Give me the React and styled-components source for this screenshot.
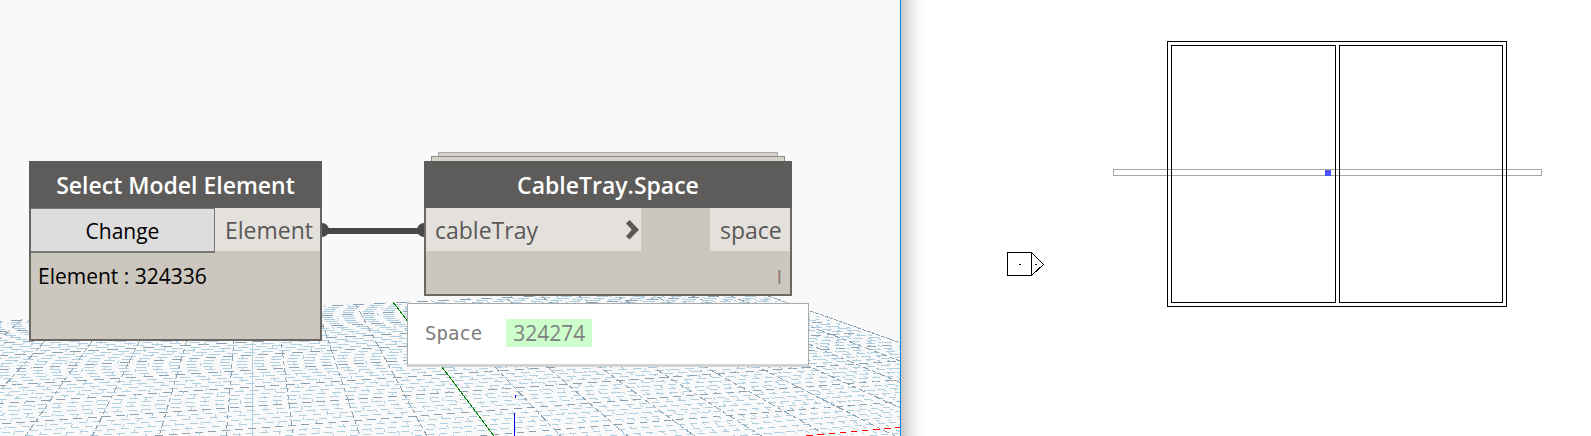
import React from "react";
import styled, { createGlobalStyle } from "styled-components";

const GlobalStyle = createGlobalStyle`
  * { box-sizing: border-box; }
  body { margin: 0; background: #fff; font-family: "Open Sans", sans-serif; }
`;

const Screen = styled.main`
  display: grid;
  grid-template-columns: 901fr 690fr;
  min-height: 100vh;
`;

const Workspace = styled.section`
  position: relative;
  overflow: hidden;
  background: #f9f9f9;
  border-right: 1px solid #1a86dc;
`;

const Scene = styled.svg`
  position: absolute;
  inset: 0;
  width: 100%;
  height: 100%;
`;

const PlanView = styled.section`
  display: flex;
  background: linear-gradient(to right, #c6c6c6 0, #dedede 6px, #eeeeee 13px, #fdfdfd 20px, #fff 24px);
`;

const Plan = styled.svg`
  width: 100%;
`;

const Node = styled.article`
  position: absolute;
  left: ${(p) => p.$x}px;
  top: 161px;
  width: ${(p) => p.$width}px;
  min-height: ${(p) => p.$height}px;
  background: #cbc6be;
  border: 2px solid #6a6763;
  border-top: 0;
`;

const Header = styled.h2`
  display: flex;
  align-items: center;
  justify-content: center;
  height: 47px;
  margin: 0 -2px;
  background: #5e5c5a;
  color: #fff;
  font-size: 23px;
  font-weight: 600;
`;

const PortRow = styled.div`
  display: flex;
  justify-content: space-between;
  height: 43px;
`;

const Port = styled.div`
  display: flex;
  align-items: center;
  justify-content: space-between;
  width: ${(p) => p.$width}px;
  padding: 0 ${(p) => (p.$input ? "2px" : "8px")} 0 ${(p) => (p.$input ? "9px" : "10px")};
  background: #e4e1dc;
  color: #5a5856;
  font-size: 23px;
`;

const ChangeButton = styled.button`
  flex: 1;
  height: 45px;
  padding: 2px 4px 0;
  border: 1px solid #777;
  border-width: 1px 1px 2px 0;
  background: #ddd;
  color: #000;
  font: 21px "Open Sans", sans-serif;
`;

const Selection = styled.p`
  margin: 0;
  padding: 11px 7px;
  color: #000;
  font-size: 21px;
  line-height: 28px;
`;

const Lacing = styled.p`
  margin: 0;
  padding: 12px 8px 0;
  color: #85796f;
  font-size: 20px;
  line-height: 28px;
  text-align: right;
`;

const StackCard = styled.div`
  position: absolute;
  left: ${(p) => p.$x}px;
  top: ${(p) => p.$y}px;
  width: ${(p) => p.$width}px;
  height: 12px;
  background: #d5d2cc;
  border: 1px solid ${(p) => p.$edge};
`;

const Preview = styled.dl`
  position: absolute;
  left: 407px;
  top: 303px;
  width: 402px;
  display: flex;
  align-items: center;
  gap: 24px;
  margin: 0;
  padding: 15px 17px 17px;
  background: #fff;
  border: 1px solid #aaa;
  border-bottom: 3px solid #d3d3d3;
`;

const PreviewKey = styled.dt`
  color: #7d7d7d;
  font: 19px "DejaVu Sans Mono", monospace;
`;

const PreviewValue = styled.dd`
  margin: 0;
  padding: 0 7px;
  background: #ccffcc;
  color: #808080;
  font-size: 21px;
  line-height: 28px;
`;

// Ground plane in perspective: depth lines meet at `vp`, cross lines far to the right.
const vp = { x: 252.5, y: 113 };
const farX = 4430;
const light = "#b0cfe1";
const dark = "#8ba1b2";

const crossPoint = (j) => {
  const dy = 1 / (0.002874 + j * 0.0000483);
  return { x: vp.x + (dy * 241) / 322, y: vp.y + dy };
};

// Where the depth line with index k meets the cross line with index j.
const meet = (k, j) => {
  const t = (240.5 + k * 13.34) / 322;
  const p = crossPoint(j);
  const m = (p.y - vp.y) / (farX - p.x);
  const dy = (p.y - vp.y + m * (p.x - vp.x)) / (1 + m * t);
  return { x: vp.x + t * dy, y: vp.y + dy };
};

// A nearly level line is drawn as one flat dash for each pixel row that it crosses.
const crossPath = (j) => {
  const p = crossPoint(j);
  const m = (p.y - vp.y) / (farX - p.x);
  const end = meet(50, j).x;
  const step = 1 / m;
  const length = Math.min(11, step * 0.6);
  let d = "";
  const first = Math.ceil(p.y + m * p.x) + 1;
  for (let row = first; row > 0; row--) {
    const x = Math.round(p.x + (p.y - row) / m);
    if (x > Math.min(end - length, 901)) break;
    if (row < 440) d += `M${x} ${row + 0.5}h${Math.round(length)}`;
  }
  return d;
};

function Ground() {
  const cross = [];
  for (let j = -24; j <= 50; j++) {
    if (j === 0) continue;
    cross.push(<path key={j} d={crossPath(j)} stroke={j % 5 === 0 ? dark : light} />);
  }
  const depth = [];
  for (let k = -50; k <= 50; k++) {
    if (k === 0) continue;
    const a = meet(k, 50);
    const b = meet(k, -40);
    const major = k % 5 === 0;
    let dash = major ? "7 3 4 3" : "4 7 3 8";
    if (k === -18) dash = undefined;
    if (k === 50) dash = "4 1";
    depth.push(
      <line
        key={k}
        x1={a.x}
        y1={a.y}
        x2={b.x}
        y2={b.y}
        stroke={major ? dark : light}
        strokeDasharray={dash}
        strokeDashoffset={(k + 50) * 7}
      />
    );
  }
  return (
    <g shapeRendering="crispEdges" fill="none">
      {cross}
      {depth}
      <line x1="393" y1="302" x2="494" y2="436" stroke="#008000" />
      <path d="M806 435.5h7M817 434.5h7M829 433.5h6M840 432.5h6M851 431.5h6M862 430.5h6M873 429.5h7M884 428.5h7M895 427.5h6" stroke="#ff0000" />
      <path d="M515.5 395v3M514.5 413v40" stroke="#0000e6" />
    </g>
  );
}

export default function App() {
  return (
    <>
      <GlobalStyle />
      <Screen>
        <Workspace>
          <Scene aria-hidden="true">
            <Ground />
            <rect x="322" y="228" width="102" height="6" fill="#484848" />
            <circle cx="322" cy="230" r="7" fill="#484848" />
            <circle cx="424" cy="230" r="7" fill="#484848" />
          </Scene>

          <Node $x={29} $width={293} $height={180}>
            <Header>Select Model Element</Header>
            <PortRow>
              <ChangeButton type="button">Change</ChangeButton>
              <Port $width={105}>Element</Port>
            </PortRow>
            <Selection>Element : 324336</Selection>
          </Node>

          <StackCard $x={438} $y={152} $width={340} $edge="#aaa9a7" />
          <StackCard $x={431} $y={156} $width={354} $edge="#8d8b89" />
          <Node $x={424} $width={368} $height={135}>
            <Header>CableTray.Space</Header>
            <PortRow>
              <Port $width={215} $input>
                cableTray
                <svg width="13" height="20" viewBox="0 0 13 20" aria-hidden="true">
                  <path d="M3.6 0 13 9.8 3.6 19.6 0 16.2 5.8 9.8 0 3.4Z" fill="#5a5856" />
                </svg>
              </Port>
              <Port $width={80}>space</Port>
            </PortRow>
            <Lacing>I</Lacing>
          </Node>

          <Preview>
            <PreviewKey>Space</PreviewKey>
            <PreviewValue>324274</PreviewValue>
          </Preview>
        </Workspace>

        <PlanView>
          <Plan viewBox="901 0 690 436" role="img" aria-label="Floor plan">
            <g fill="none" stroke="#000" shapeRendering="crispEdges">
              <rect x="1113.5" y="169.5" width="428" height="6" stroke="#a6a6a6" />
              <rect x="1167.5" y="41.5" width="339" height="265" />
              <rect x="1171.5" y="45.5" width="164" height="257" />
              <rect x="1339.5" y="45.5" width="163" height="257" />
              <rect x="1007.5" y="252.5" width="24" height="23" />
              <path d="M1031.5 252.5 1043.5 264.5 1031.5 275.5M1019 264.5h2M1035 264.5h2" />
            </g>
            <rect x="1325" y="170" width="6" height="6" fill="#5050ff" />
          </Plan>
        </PlanView>
      </Screen>
    </>
  );
}
